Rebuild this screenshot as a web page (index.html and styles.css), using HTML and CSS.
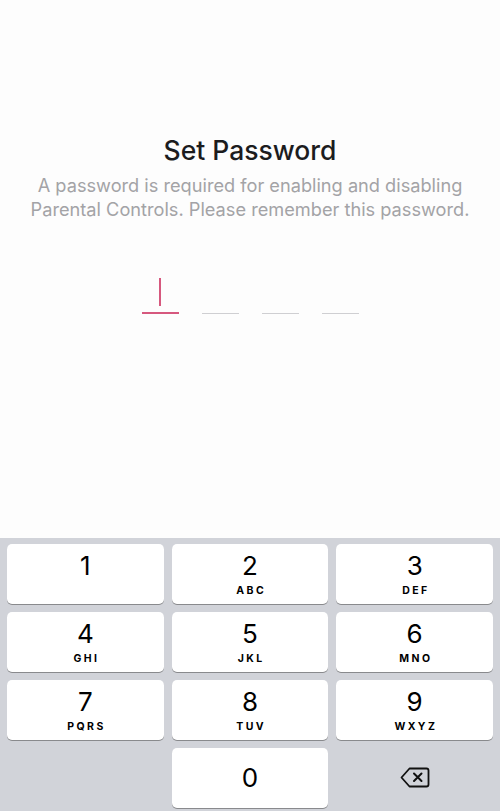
FILE: index.html
```html
<!DOCTYPE html>
<html lang="en">
<head>
  <meta charset="UTF-8" />
  <meta name="viewport" content="width=device-width, initial-scale=1.0"/>
  <title>Set Password</title>
  <link rel="stylesheet" href="styles.css">
</head>
<body>
  <div class="screen">
    <div class="content">
      <h1 class="title">Set Password</h1>
      <p class="subtitle">A password is required for enabling and disabling<br>Parental Controls. Please remember this password.</p>

      <div class="code">
        <div class="slot active"><span class="cursor"></span></div>
        <div class="slot"></div>
        <div class="slot"></div>
        <div class="slot"></div>
      </div>
    </div>

    <div class="keypad">
      <button class="key"><span class="digit">1</span><span class="letters"></span></button>
      <button class="key"><span class="digit">2</span><span class="letters">ABC</span></button>
      <button class="key"><span class="digit">3</span><span class="letters">DEF</span></button>
      <button class="key"><span class="digit">4</span><span class="letters">GHI</span></button>
      <button class="key"><span class="digit">5</span><span class="letters">JKL</span></button>
      <button class="key"><span class="digit">6</span><span class="letters">MNO</span></button>
      <button class="key"><span class="digit">7</span><span class="letters">PQRS</span></button>
      <button class="key"><span class="digit">8</span><span class="letters">TUV</span></button>
      <button class="key"><span class="digit">9</span><span class="letters">WXYZ</span></button>
      <div class="blank"></div>
      <button class="key zero"><span class="digit">0</span></button>
      <button class="backspace" aria-label="Delete">
        <svg width="30" height="21" viewBox="0 0 30 21">
          <path d="M9.5 1.5 H26.5 A2 2 0 0 1 28.5 3.5 V17.5 A2 2 0 0 1 26.5 19.5 H9.5 L1.5 10.5 Z" fill="none" stroke="#111" stroke-width="1.8" stroke-linejoin="round"/>
          <path d="M14 6.5 L21.5 14 M21.5 6.5 L14 14" stroke="#111" stroke-width="2" stroke-linecap="round"/>
        </svg>
      </button>
    </div>
  </div>
</body>
</html>
```

FILE: styles.css
```css
body {
  margin: 0;
  padding: 0;
  background-color: #fdfdfd;
  font-family: Inter, "Noto Sans", sans-serif;
}

.screen {
  height: 811px;
  display: flex;
  flex-direction: column;
}

.content {
  flex: 1;
  text-align: center;
  padding-top: 134px;
}

.title {
  margin: 0;
  font-size: 26.5px;
  line-height: 32px;
  font-weight: 500;
  color: #1c1c1e;
}

.subtitle {
  margin: 7px 0 0;
  font-size: 18.2px;
  line-height: 24px;
  color: #a3a3a6;
}

.code {
  display: flex;
  justify-content: center;
  gap: 23px;
  margin-top: 53px;
}

.slot {
  width: 37px;
  height: 39px;
  border-bottom: 1px solid #cfcfd2;
  position: relative;
}

.slot.active {
  border-bottom: 2px solid #d6587e;
  height: 38px;
}

.cursor {
  position: absolute;
  left: 17px;
  top: 4px;
  width: 2px;
  height: 28px;
  background-color: #d6587e;
}

.keypad {
  background-color: #d1d3d9;
  padding: 6px 7px 3px;
  display: grid;
  grid-template-columns: repeat(3, 1fr);
  grid-auto-rows: 60px;
  gap: 8px 8px;
}

.key {
  border: none;
  border-radius: 5px;
  background-color: #fff;
  box-shadow: 0 1px 0 #898a8d;
  display: flex;
  flex-direction: column;
  align-items: center;
  padding: 7px 0 0;
  font-family: Inter, "Noto Sans", sans-serif;
  color: #000;
}

.digit {
  font-size: 26px;
  line-height: 30px;
  font-weight: 400;
}

.letters {
  font-size: 10.5px;
  line-height: 14px;
  font-weight: 700;
  letter-spacing: 2.4px;
  margin-left: 2.4px;
  margin-top: 3px;
}

.key.zero {
  justify-content: center;
  padding: 0;
}

.backspace {
  border: none;
  background: none;
  display: flex;
  align-items: center;
  justify-content: center;
  padding: 0 0 2px;
}
```
